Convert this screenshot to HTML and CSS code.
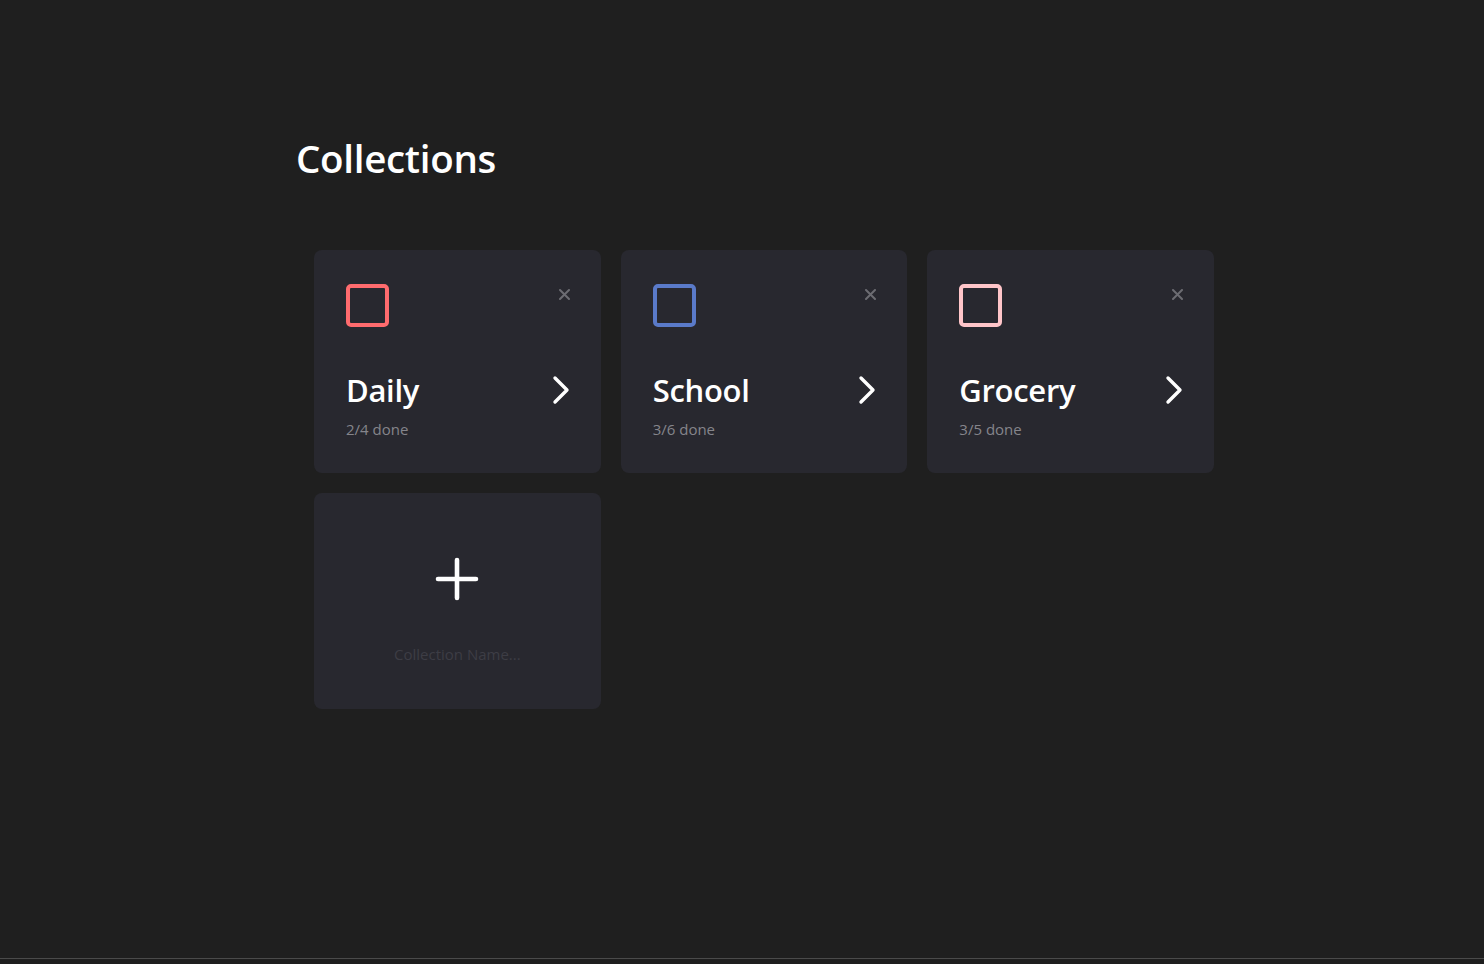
FILE: index.html
```html
<!DOCTYPE html>
<html>
<head>
<meta charset="utf-8">
<link rel="stylesheet" href="styles.css">
</head>
<body>
<main class="page">
  <h1 class="title">Collections</h1>
  <div class="grid">
    <div class="card">
      <div class="card-top">
        <span class="check red"></span>
        <svg class="close" width="11" height="11" viewBox="0 0 11 11"><path d="M1 1 L10 10 M10 1 L1 10" stroke="#6c6c72" stroke-width="2" stroke-linecap="round"/></svg>
      </div>
      <div class="card-row">
        <span class="name">Daily</span>
        <svg class="chev" width="20" height="30" viewBox="0 0 20 30"><path d="M4 3 L16 15 L4 27" fill="none" stroke="#fff" stroke-width="3.4" stroke-linecap="round" stroke-linejoin="round"/></svg>
      </div>
      <div class="done">2/4 done</div>
    </div>
    <div class="card">
      <div class="card-top">
        <span class="check blue"></span>
        <svg class="close" width="11" height="11" viewBox="0 0 11 11"><path d="M1 1 L10 10 M10 1 L1 10" stroke="#6c6c72" stroke-width="2" stroke-linecap="round"/></svg>
      </div>
      <div class="card-row">
        <span class="name">School</span>
        <svg class="chev" width="20" height="30" viewBox="0 0 20 30"><path d="M4 3 L16 15 L4 27" fill="none" stroke="#fff" stroke-width="3.4" stroke-linecap="round" stroke-linejoin="round"/></svg>
      </div>
      <div class="done">3/6 done</div>
    </div>
    <div class="card">
      <div class="card-top">
        <span class="check pink"></span>
        <svg class="close" width="11" height="11" viewBox="0 0 11 11"><path d="M1 1 L10 10 M10 1 L1 10" stroke="#6c6c72" stroke-width="2" stroke-linecap="round"/></svg>
      </div>
      <div class="card-row">
        <span class="name">Grocery</span>
        <svg class="chev" width="20" height="30" viewBox="0 0 20 30"><path d="M4 3 L16 15 L4 27" fill="none" stroke="#fff" stroke-width="3.4" stroke-linecap="round" stroke-linejoin="round"/></svg>
      </div>
      <div class="done">3/5 done</div>
    </div>
    <div class="card add">
      <svg class="plus" width="44" height="44" viewBox="0 0 44 44"><path d="M22 3 V41 M3 22 H41" stroke="#fff" stroke-width="4.6" stroke-linecap="round"/></svg>
      <input class="new-name" type="text" placeholder="Collection Name...">
    </div>
  </div>
</main>
<div class="bottom-line"></div>
</body>
</html>
```
FILE: styles.css
```css
html, body {
  margin: 0;
  padding: 0;
  background: #1f1f1f;
  font-family: "Open Sans", "Noto Sans", sans-serif;
  color: #fff;
}
body {
  height: 964px;
  display: flex;
  flex-direction: column;
  overflow: hidden;
}
.page {
  flex: 1;
  padding: 128px 0 0 296px;
}
.title {
  margin: 0;
  font-size: 38.5px;
  font-weight: 600;
  line-height: 60px;
  letter-spacing: -0.3px;
}
.grid {
  margin: 62px 0 0 18px;
  width: 900px;
  display: grid;
  grid-template-columns: repeat(3, 1fr);
  gap: 20px 20px;
}
.card {
  background: #28282f;
  border-radius: 8px;
  height: 223px;
  box-sizing: border-box;
  padding: 34px 32px 0 32px;
  display: flex;
  flex-direction: column;
}
.card-top {
  display: flex;
  justify-content: space-between;
  align-items: flex-start;
  height: 43px;
}
.check {
  width: 43px;
  height: 43px;
  box-sizing: border-box;
  border: 4px solid;
  border-radius: 5px;
}
.check.red { border-color: #ff6b6e; }
.check.blue { border-color: #5a7ac9; }
.check.pink { border-color: #ffc5c9; }
.close {
  margin-top: 5px;
  margin-right: -1px;
}
.card-row {
  margin-top: 48px;
  display: flex;
  justify-content: space-between;
  align-items: center;
  height: 30px;
}
.name {
  font-size: 31px;
  font-weight: 600;
  line-height: 30px;
  letter-spacing: -0.3px;
}
.chev {
  margin-right: -2px;
}
.done {
  margin-top: 14px;
  font-size: 15px;
  color: #85858b;
  line-height: 20px;
}
.card.add {
  height: 216px;
  padding: 0;
  align-items: center;
}
.plus {
  margin-top: 64px;
}
.new-name {
  margin-top: 42px;
  width: 220px;
  background: transparent;
  border: none;
  outline: none;
  text-align: center;
  font-family: "Open Sans", "Noto Sans", sans-serif;
  font-size: 15px;
  color: #fff;
}
.new-name::placeholder {
  color: #3d3d45;
}
.bottom-line {
  height: 5px;
  border-top: 1px solid #4a4a4a;
  background: #1e1e1e;
}
```
